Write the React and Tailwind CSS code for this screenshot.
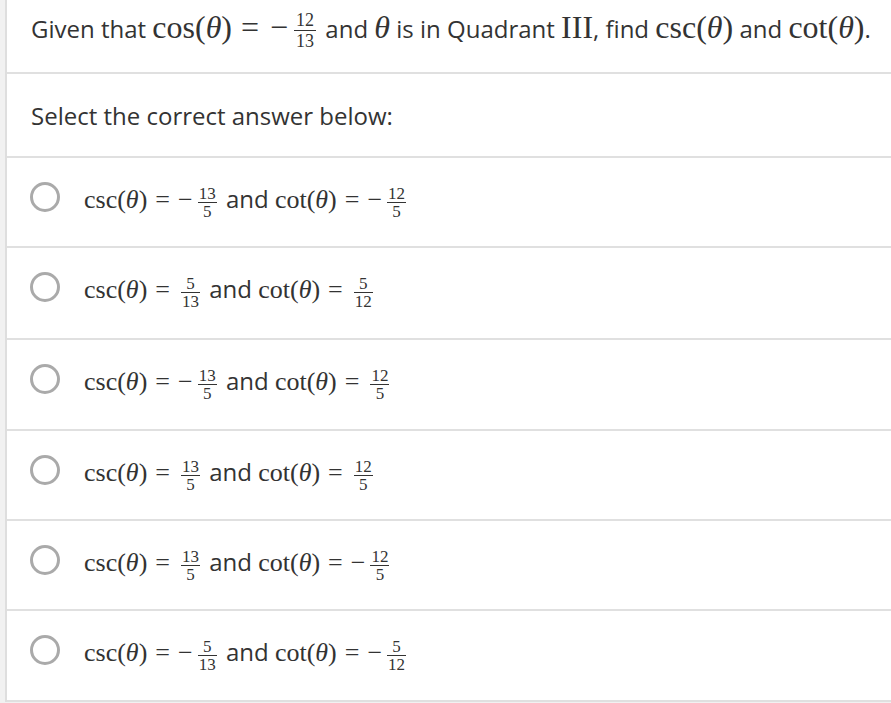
import React from "react";

const Th = () => <i className="italic">θ</i>;

const Eq = ({ big }) => (
  <span className={big ? "ml-[9px] mr-[11px]" : "mx-[8px]"}>=</span>
);

const Frac = ({ num, den, neg, big }) => (
  <>
    {neg && <span className={big ? "mr-[3px]" : "mr-[2px]"}>−</span>}
    <span
      className={`inline-flex flex-col items-center leading-[12px] mx-[3px] ${
        big ? "align-[12px] text-[18px]" : "align-[9px] text-[17px]"
      }`}
    >
      <span className={big ? "px-[2px] mb-[4px]" : "px-[1px] mb-[2px]"}>{num}</span>
      <span className="w-full h-[1px] bg-[#333]"></span>
      <span className={big ? "px-[2px] mt-[4px]" : "px-[1px] mt-[3px]"}>{den}</span>
    </span>
  </>
);

const M = ({ children, big }) => (
  <span className={`font-['Liberation_Serif'] ${big ? "text-[32px]" : "text-[26px]"}`}>
    {children}
  </span>
);

const options = [
  { csc: ["13", "5", true], cot: ["12", "5", true], h: "h-[90px]" },
  { csc: ["5", "13", false], cot: ["5", "12", false], h: "h-[92px]" },
  { csc: ["13", "5", true], cot: ["12", "5", false], h: "h-[91px]" },
  { csc: ["13", "5", false], cot: ["12", "5", false], h: "h-[90px]" },
  { csc: ["13", "5", false], cot: ["12", "5", true], h: "h-[90px]" },
  { csc: ["5", "13", true], cot: ["5", "12", true], h: "h-[91px]" },
];

export default function App() {
  return (
    <div className="min-h-[703px] bg-[#f1f1f1] pl-[5px] font-['Open_Sans'] text-[#333] text-[24px] leading-[36px]">
      <div className="bg-white border-l-2 border-[#dedede]">
        <div className="h-[74px] border-b-2 border-[#e0e0e0] pl-[24px] pt-[9px] whitespace-nowrap">
          Given that{" "}
          <M big>
            cos(<Th />)<Eq big />
            <Frac num="12" den="13" neg big />
          </M>{" "}
          and <M big><Th /></M> is in Quadrant <M big>III</M>, find{" "}
          <M big>csc(<Th />)</M> and <M big>cot(<Th />)</M>.
        </div>
        <div className="h-[84px] border-b-2 border-[#e0e0e0] pl-[24px] pt-[24px]">
          Select the correct answer below:
        </div>
        {options.map((o, i) => (
          <div
            key={i}
            className={`${o.h} border-b-2 border-[#e0e0e0] flex items-start pl-[23px] whitespace-nowrap`}
          >
            <span className="mt-[24px] w-[30px] h-[30px] rounded-full border-[3px] border-[#aaaaaa] shrink-0"></span>
            <span className="mt-[23px] ml-[24px]">
              <M>
                csc(<Th />)<Eq />
                <Frac num={o.csc[0]} den={o.csc[1]} neg={o.csc[2]} />
              </M>{" "}
              and{" "}
              <M>
                cot(<Th />)<Eq />
                <Frac num={o.cot[0]} den={o.cot[1]} neg={o.cot[2]} />
              </M>
            </span>
          </div>
        ))}
      </div>
    </div>
  );
}
